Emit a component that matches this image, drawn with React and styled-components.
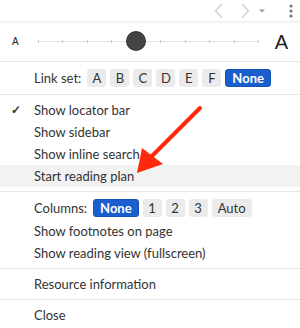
import React from 'react';
import styled, { createGlobalStyle } from 'styled-components';

const GlobalStyle = createGlobalStyle`
  html, body {
    margin: 0;
    padding: 0;
    background: #fff;
  }
  body {
    font-family: Lato, "Open Sans", sans-serif;
    color: #333;
  }
`;

const Panel = styled.div`
  position: relative;
  width: 300px;
  height: 328px;
  overflow: hidden;
  background: #fff;
`;

const TopBar = styled.div`
  height: 21px;
  display: flex;
  align-items: center;
  justify-content: flex-end;
  padding-right: 6px;
  border-bottom: 1px solid #eee;
  box-shadow: 0 1px 2px rgba(0, 0, 0, 0.04);
`;

const NavIcon = styled.svg`
  display: block;
  margin-left: ${props => props.gap || 0}px;
`;

const SliderRow = styled.div`
  height: 39px;
  display: flex;
  align-items: center;
  padding: 0 12px;
  border-bottom: 1px solid #e6e6e6;
`;

const SizeLabel = styled.span`
  font-family: "Liberation Sans", Arial, sans-serif;
  font-size: ${props => props.size}px;
  color: #222;
  line-height: 1;
  width: ${props => props.w}px;
  text-align: ${props => props.align};
`;

const Track = styled.div`
  position: relative;
  flex: 1;
  height: 14px;
  margin: 0 0 0 14px;
  max-width: 222px;
`;

const TrackLine = styled.div`
  position: absolute;
  left: 0;
  right: 0;
  top: 6px;
  height: 1px;
  background: #e2e2e2;
`;

const Tick = styled.div`
  position: absolute;
  top: 5px;
  width: 1px;
  height: 3px;
  background: #ccc;
`;

const Knob = styled.div`
  position: absolute;
  top: -3px;
  width: 18px;
  height: 18px;
  margin-left: -9px;
  border-radius: 50%;
  background: #444;
  box-shadow: 0 0 0 1px #333;
`;

const Section = styled.div`
  padding: ${props => props.pad || '4px 0'};
  border-bottom: ${props => (props.last ? 'none' : '1px solid #e6e6e6')};
`;

const Item = styled.div`
  position: relative;
  height: 22px;
  line-height: 22px;
  padding-left: 34px;
  font-size: 13px;
  color: #333;
  background: ${props => (props.active ? '#f2f2f2' : 'transparent')};
`;

const Check = styled.span`
  position: absolute;
  left: 11px;
  top: 0;
  font-size: 12px;
  font-weight: 700;
  color: #333;
`;

const PillRow = styled.div`
  height: ${props => props.h || 24}px;
  display: flex;
  align-items: center;
  padding-left: 34px;
  font-size: 13px;
  color: #333;
`;

const PillLabel = styled.span`
  margin-right: 6px;
`;

const Pill = styled.span`
  height: 18px;
  min-width: 19px;
  box-sizing: border-box;
  padding: 0 ${props => (props.wide ? 6 : 0)}px;
  margin-right: 4px;
  border-radius: 3px;
  display: inline-flex;
  align-items: center;
  justify-content: center;
  font-size: 13px;
  font-weight: ${props => (props.selected ? 700 : 400)};
  background: ${props => (props.selected ? '#1b5fcf' : '#ebebeb')};
  color: ${props => (props.selected ? '#fff' : '#333')};
  border: ${props => (props.selected ? '1px solid #1552b5' : 'none')};
`;

const ArrowOverlay = styled.svg`
  position: absolute;
  left: 0;
  top: 0;
  pointer-events: none;
`;

const ticks = [0, 1, 2, 3, 4, 5, 6, 7, 8, 9];

const Slider = ({ value }) => (
  <Track>
    <TrackLine />
    {ticks.map(t => (
      <Tick key={t} style={{ left: `${(t / 9) * 100}%` }} />
    ))}
    <Knob style={{ left: `${(value / 9) * 100}%` }} />
  </Track>
);

const Pills = ({ items, selected }) =>
  items.map(p => (
    <Pill key={p} wide={p.length > 1} selected={p === selected}>
      {p}
    </Pill>
  ));

export default function App() {
  return (
    <Panel>
      <GlobalStyle />
      <TopBar>
        <NavIcon width="12" height="16" viewBox="0 0 12 16">
          <path d="M9 1 L2.5 8 L9 15" fill="none" stroke="#d2d2d2" strokeWidth="1.4" />
        </NavIcon>
        <NavIcon gap={14} width="12" height="16" viewBox="0 0 12 16">
          <path d="M3 1 L9.5 8 L3 15" fill="none" stroke="#d2d2d2" strokeWidth="1.4" />
        </NavIcon>
        <NavIcon gap={7} width="8" height="6" viewBox="0 0 8 6">
          <path d="M1 1.5 L7 1.5 L4 4.5 Z" fill="#999" />
        </NavIcon>
        <NavIcon gap={22} width="6" height="16" viewBox="0 0 6 16">
          <circle cx="3" cy="3" r="1.6" fill="#777" />
          <circle cx="3" cy="8" r="1.6" fill="#777" />
          <circle cx="3" cy="13" r="1.6" fill="#777" />
        </NavIcon>
      </TopBar>

      <SliderRow>
        <SizeLabel size={10} w={12} align="left">A</SizeLabel>
        <Slider value={4} />
        <SizeLabel size={20} w={30} align="right">A</SizeLabel>
      </SliderRow>

      <Section pad="7px 0">
        <PillRow h={18}>
          <PillLabel>Link set:</PillLabel>
          <Pills items={['A', 'B', 'C', 'D', 'E', 'F', 'None']} selected="None" />
        </PillRow>
      </Section>

      <Section>
        <Item>
          <Check>✓</Check>
          Show locator bar
        </Item>
        <Item>Show sidebar</Item>
        <Item>Show inline search</Item>
        <Item active>Start reading plan</Item>
      </Section>

      <Section>
        <PillRow>
          <PillLabel>Columns:</PillLabel>
          <Pills items={['None', '1', '2', '3', 'Auto']} selected="None" />
        </PillRow>
        <Item>Show footnotes on page</Item>
        <Item>Show reading view (fullscreen)</Item>
      </Section>

      <Section>
        <Item>Resource information</Item>
      </Section>

      <Section last>
        <Item>Close</Item>
      </Section>

      <ArrowOverlay width="300" height="328" viewBox="0 0 300 328">
        <line x1="200" y1="108" x2="151" y2="157" stroke="#ff2a0c" strokeWidth="4" strokeLinecap="round" />
        <path d="M137 173 L142 148 L163 164 Z" fill="#ff2a0c" />
      </ArrowOverlay>
    </Panel>
  );
}
